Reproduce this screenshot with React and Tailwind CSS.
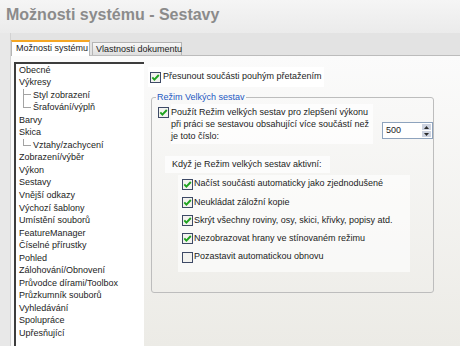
import React from "react";

const tree = [
  ["Obecné", 0],
  ["Výkresy", 0],
  ["Styl zobrazení", 1, "mid"],
  ["Šrafování/výplň", 1, "end"],
  ["Barvy", 0],
  ["Skica", 0],
  ["Vztahy/zachycení", 1, "end"],
  ["Zobrazení/výběr", 0],
  ["Výkon", 0],
  ["Sestavy", 0],
  ["Vnější odkazy", 0],
  ["Výchozí šablony", 0],
  ["Umístění souborů", 0],
  ["FeatureManager", 0],
  ["Číselné přírustky", 0],
  ["Pohled", 0],
  ["Zálohování/Obnovení", 0],
  ["Průvodce dírami/Toolbox", 0],
  ["Průzkumník souborů", 0],
  ["Vyhledávání", 0],
  ["Spolupráce", 0],
  ["Upřesňující", 0],
];

const options = [
  ["Načíst součásti automaticky jako zjednodušené", true],
  ["Neukládat záložní kopie", true],
  ["Skrýt všechny roviny, osy, skici, křivky, popisy atd.", true],
  ["Nezobrazovat hrany ve stínovaném režimu", true],
  ["Pozastavit automatickou obnovu", false],
];

const Check = ({ checked = true }) => (
  <svg width="11" height="11" viewBox="0 0 11 11" className="shrink-0">
    <rect x="0.5" y="0.5" width="10" height="10" fill="#f3f3ef" stroke="#3e4a66" />
    {checked && (
      <path d="M2.3 5.4 L4.4 7.7 L8.8 3" fill="none" stroke="#1fa31f" strokeWidth="1.9" />
    )}
  </svg>
);

const TreeRow = ({ label, level, line }) => {
  if (!level) {
    return <div className="h-[12.55px] flex items-center whitespace-nowrap">{label}</div>;
  }
  return (
    <div className="h-[12.55px] flex items-stretch whitespace-nowrap">
      <div className="w-[4px]" />
      <div className="w-[8px] flex flex-col">
        <div className="h-1/2 border-l border-b border-[#a3a3a3]" />
        {line === "mid" && <div className="flex-1 border-l border-[#a3a3a3]" />}
      </div>
      <span className="ml-[2px] self-center">{label}</span>
    </div>
  );
};

const Spinner = () => (
  <div className="mt-[18px] ml-auto w-[51px] h-[17px] border border-[#8ea3bd] bg-white flex">
    <span className="flex-1 pl-[3px] leading-[15px]">500</span>
    <div className="w-[10px] flex flex-col gap-[1px] py-[1px] pr-[1px]">
      <div className="flex-1 bg-[#cdd3e0] flex items-center justify-center">
        <svg width="5" height="3" viewBox="0 0 5 3"><path d="M0 3 L2.5 0 L5 3 Z" fill="#2b2b2b" /></svg>
      </div>
      <div className="flex-1 bg-[#cdd3e0] flex items-center justify-center">
        <svg width="5" height="3" viewBox="0 0 5 3"><path d="M0 0 L2.5 3 L5 0 Z" fill="#2b2b2b" /></svg>
      </div>
    </div>
  </div>
);

export default function App() {
  return (
    <div className="w-[460px] h-[346px] overflow-hidden bg-[#ececec] flex flex-col font-['Liberation_Sans',Arial,sans-serif] text-[9px] text-[#1c1c1c]">
      <div className="h-[33px] shrink-0 pl-[6px] pt-[5px] leading-[20px] text-[16px] font-bold text-[#8b8b8b] bg-gradient-to-b from-[#f5f5f5] to-[#ebebeb]">
        Možnosti systému - Sestavy
      </div>

      <div className="flex-1 flex min-h-0">
        <div className="w-[11px] shrink-0 bg-[#e8e8e8] border-r border-[#d2d2d2]" />

        <div className="flex-1 flex flex-col min-w-0">
          <div className="h-[23px] shrink-0 flex items-end gap-[2px] bg-[#e3e3e3] border-b border-[#bcbcbc]">
            <div className="w-[79px] h-[16px] -mb-[1px] bg-white border-t-2 border-x border-t-[#f5a623] border-x-[#b5b5b5] pl-[4px] leading-[13px] whitespace-nowrap">
              Možnosti systému
            </div>
            <div className="w-[90px] h-[13px] bg-gradient-to-b from-[#f7f7f7] to-[#dedede] border-t border-x border-[#b5b5b5] pl-[3px] leading-[12px] whitespace-nowrap">
              Vlastnosti dokumentu
            </div>
          </div>

          <div className="flex-1 flex min-h-0 bg-[#fbfbfb]">
            <div className="ml-[3px] mt-[6px] w-[130px] shrink-0 bg-white border-l-2 border-t-2 border-[#3d3d3d] pl-[3px]">
              {tree.map(([label, level, line]) => (
                <TreeRow key={label} label={label} level={level} line={line} />
              ))}
            </div>

            <div className="flex-1 flex flex-col bg-gradient-to-b from-[#fbfbfb] to-[#ecebe6]">
              <div className="mt-[11px] ml-[4px] self-start h-[20px] px-[2px] bg-white flex items-center gap-[2px] whitespace-nowrap">
                <Check />
                <span>Přesunout součásti pouhým přetažením</span>
              </div>

              <fieldset className="mt-[4px] ml-[7px] w-[283px] border border-[#bdbdbd] rounded-[3px] pb-[20px]">
                <legend className="ml-[4px] px-[1px] leading-[12px] text-[#1d58c2]">Režim Velkých sestav</legend>

                <div className="mt-[1px] ml-[6px] flex items-start">
                  <div className="mt-[3px]">
                    <Check />
                  </div>
                  <div className="ml-[2px] py-[2px] pr-[4px] bg-white/70 leading-[12px] whitespace-nowrap">
                    Použít Režim velkých sestav pro zlepšení výkonu
                    <br />
                    při práci se sestavou obsahující více součástí než
                    <br />
                    je toto číslo:
                  </div>
                  <Spinner />
                </div>

                <div className="mt-[12px] ml-[13px] w-[165px] h-[17px] px-[7px] bg-white/70 flex items-center whitespace-nowrap">
                  Když je Režim velkých sestav aktivní:
                </div>

                <div className="mt-[2px] ml-[26px] w-[232px] pb-[6px] bg-white/60 flex flex-col">
                  {options.map(([label, checked]) => (
                    <div key={label} className="h-[18.25px] pl-[4px] flex items-center gap-[1px] whitespace-nowrap">
                      <Check checked={checked} />
                      <span>{label}</span>
                    </div>
                  ))}
                </div>
              </fieldset>
            </div>
          </div>
        </div>
      </div>
    </div>
  );
}
